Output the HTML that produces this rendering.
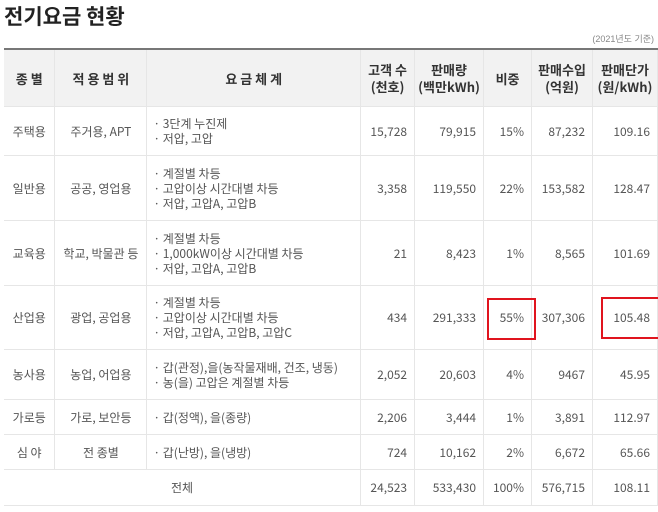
<!DOCTYPE html>
<html><head><meta charset="utf-8"><style>
body{margin:0;width:658px;height:512px;background:#fff;overflow:hidden;font-family:"Liberation Sans","Noto Sans CJK KR",sans-serif;color:#555;position:relative}
h1{position:absolute;left:4px;top:0;margin:0;font-size:21px;font-weight:bold;color:#222;line-height:32px;font-family:"Noto Sans CJK KR",sans-serif}
.note{position:absolute;right:4px;top:32px;font-size:9px;color:#888}
table{position:absolute;left:4px;top:48px;border-collapse:collapse;table-layout:fixed;font-size:12px;border-top:2px solid #777;font-family:"Noto Sans CJK KR",sans-serif}
td,th{border:1px solid #e6e6e6;border-top:none;padding:0;line-height:15px}
tr td:first-child,tr th:first-child{border-left:none}
th{background:#f2f2f2;color:#333;font-weight:bold;font-size:13px;height:56px;line-height:17px}
td{text-align:center}
td.n{text-align:right;padding-right:7px}
td.l{text-align:left;padding-left:6px}
.box{position:absolute;border:2px solid #e0141e}
</style></head><body>
<h1>전기요금 현황</h1>
<div class="note">(2021년도 기준)</div>
<table>
<colgroup><col style="width:51px"><col style="width:92px"><col style="width:214px"><col style="width:54px"><col style="width:69px"><col style="width:48px"><col style="width:61px"><col style="width:65px"></colgroup>
<tr><th>종 별</th><th>적 용 범 위</th><th>요 금 체 계</th><th>고객 수<br>(천호)</th><th>판매량<br>(백만kWh)</th><th>비중</th><th>판매수입<br>(억원)</th><th>판매단가<br>(원/kWh)</th></tr>
<tr style="height:49px"><td>주택용</td><td>주거용, APT</td><td class="l">· 3단계 누진제<br>· 저압, 고압</td><td class="n">15,728</td><td class="n">79,915</td><td class="n">15%</td><td class="n">87,232</td><td class="n">109.16</td></tr>
<tr style="height:65px"><td>일반용</td><td>공공, 영업용</td><td class="l">· 계절별 차등<br>· 고압이상 시간대별 차등<br>· 저압, 고압A, 고압B</td><td class="n">3,358</td><td class="n">119,550</td><td class="n">22%</td><td class="n">153,582</td><td class="n">128.47</td></tr>
<tr style="height:65px"><td>교육용</td><td>학교, 박물관 등</td><td class="l">· 계절별 차등<br>· 1,000kW이상 시간대별 차등<br>· 저압, 고압A, 고압B</td><td class="n">21</td><td class="n">8,423</td><td class="n">1%</td><td class="n">8,565</td><td class="n">101.69</td></tr>
<tr style="height:64px"><td>산업용</td><td>광업, 공업용</td><td class="l">· 계절별 차등<br>· 고압이상 시간대별 차등<br>· 저압, 고압A, 고압B, 고압C</td><td class="n">434</td><td class="n">291,333</td><td class="n">55%</td><td class="n">307,306</td><td class="n">105.48</td></tr>
<tr style="height:50px"><td>농사용</td><td>농업, 어업용</td><td class="l">· 갑(관정),을(농작물재배, 건조, 냉동)<br>· 농(을) 고압은 계절별 차등</td><td class="n">2,052</td><td class="n">20,603</td><td class="n">4%</td><td class="n">9467</td><td class="n">45.95</td></tr>
<tr style="height:35px"><td>가로등</td><td>가로, 보안등</td><td class="l">· 갑(정액), 을(종량)</td><td class="n">2,206</td><td class="n">3,444</td><td class="n">1%</td><td class="n">3,891</td><td class="n">112.97</td></tr>
<tr style="height:35px"><td>심 야</td><td>전 종별</td><td class="l">· 갑(난방), 을(냉방)</td><td class="n">724</td><td class="n">10,162</td><td class="n">2%</td><td class="n">6,672</td><td class="n">65.66</td></tr>
<tr style="height:36px"><td colspan="3">전체</td><td class="n">24,523</td><td class="n">533,430</td><td class="n">100%</td><td class="n">576,715</td><td class="n">108.11</td></tr>
</table>
<div class="box" style="left:487px;top:298px;width:45px;height:38px"></div>
<div class="box" style="left:601px;top:297px;width:60px;height:38px"></div>
</body></html>
